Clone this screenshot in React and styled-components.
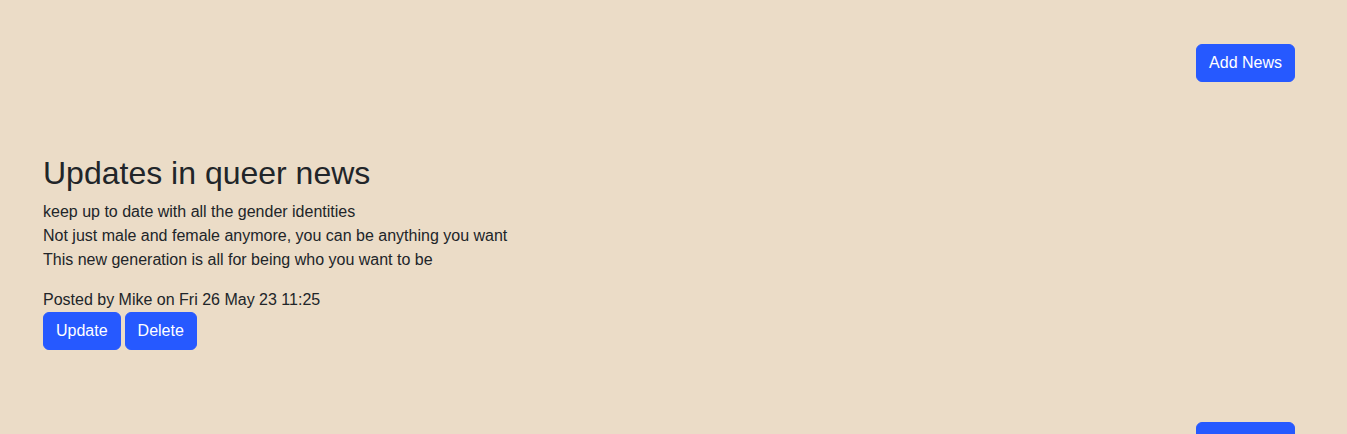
import React from "react";
import styled, { createGlobalStyle } from "styled-components";

const Global = createGlobalStyle`
  html, body { margin: 0; padding: 0; }
  body {
    background: #ebdcc7;
    color: #212529;
    font-family: "Liberation Sans", Arial, sans-serif;
    font-size: 16px;
    line-height: 1.5;
  }
`;

const Page = styled.main`
  padding: 44px 52px 0 43px;
`;

const Item = styled.section`
  margin-bottom: 72px;
`;

const TopBar = styled.div`
  display: flex;
  justify-content: flex-end;
`;

const Button = styled.button`
  font-family: inherit;
  font-size: 16px;
  line-height: 24px;
  padding: 6px 12px;
  border: 1px solid #2659ff;
  border-radius: 6px;
  background: #2659ff;
  color: #fff;
  cursor: pointer;
`;

const Post = styled.article`
  margin-top: 72px;
`;

const Title = styled.h1`
  margin: 0 0 8px;
  font-size: 32px;
  font-weight: 400;
  line-height: 1.2;
`;

const Body = styled.p`
  margin: 0 0 16px;
  white-space: pre-line;
`;

const Meta = styled.div``;

const Actions = styled.div`
  display: flex;
  gap: 4px;
`;

const posts = [
  {
    title: "Updates in queer news",
    body: "keep up to date with all the gender identities\nNot just male and female anymore, you can be anything you want\nThis new generation is all for being who you want to be",
    meta: "Posted by Mike on Fri 26 May 23 11:25",
  },
  {
    title: "Updates in queer news",
    body: "keep up to date with all the gender identities\nNot just male and female anymore, you can be anything you want\nThis new generation is all for being who you want to be",
    meta: "Posted by Mike on Fri 26 May 23 11:25",
  },
];

export default function App() {
  return (
    <>
      <Global />
      <Page>
        {posts.map((p, i) => (
          <Item key={i}>
            <TopBar>
              <Button>Add News</Button>
            </TopBar>
            <Post>
              <Title>{p.title}</Title>
              <Body>{p.body}</Body>
              <Meta>{p.meta}</Meta>
              <Actions>
                <Button>Update</Button>
                <Button>Delete</Button>
              </Actions>
            </Post>
          </Item>
        ))}
      </Page>
    </>
  );
}
